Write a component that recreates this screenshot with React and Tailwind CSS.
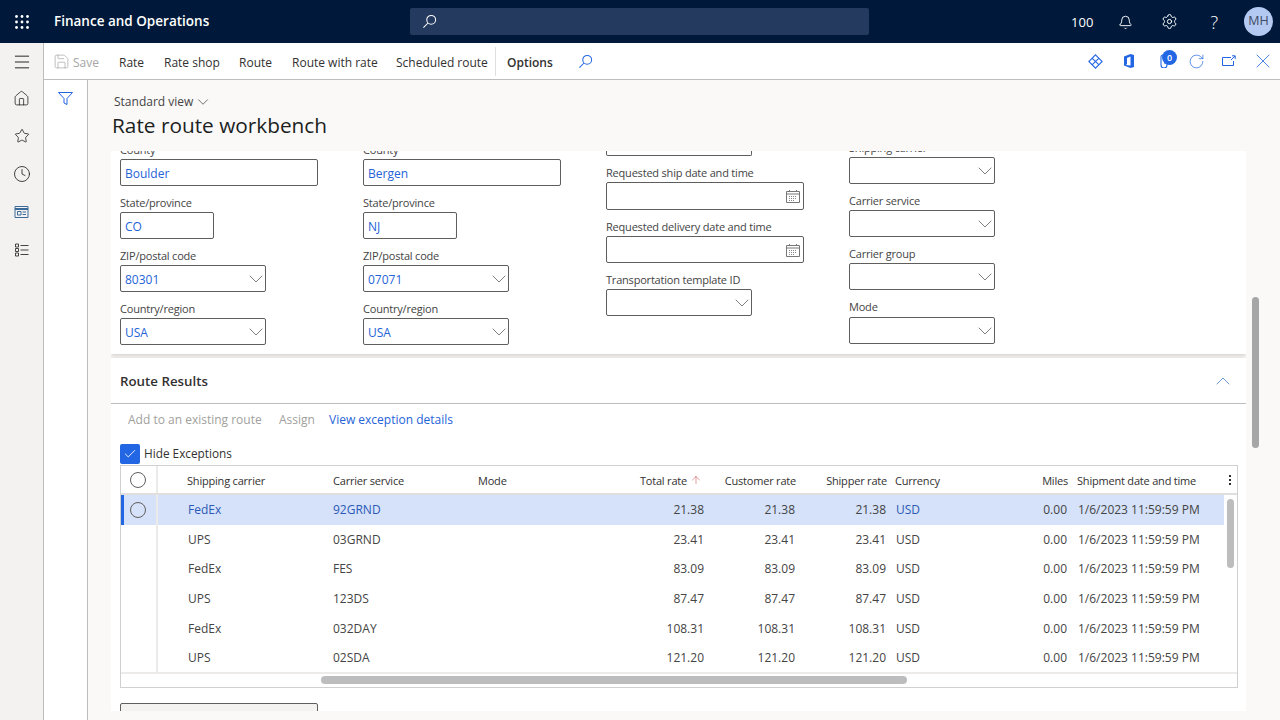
import { ChevronDown, ChevronUp, ArrowUp, Check, X, Bell, Settings, Home, Star, Clock, Menu, Save, RotateCw } from 'lucide-react';

const rows = [
  ['FedEx', '92GRND', '21.38'],
  ['UPS', '03GRND', '23.41'],
  ['FedEx', 'FES', '83.09'],
  ['UPS', '123DS', '87.47'],
  ['FedEx', '032DAY', '108.31'],
  ['UPS', '02SDA', '121.20'],
];

function SearchIcon({ className }) {
  return (
    <svg viewBox="0 0 16 16" className={className} fill="none" stroke="currentColor" strokeWidth="1.1">
      <circle cx="9.8" cy="6.2" r="4.7" />
      <path d="M6.4 9.6 1.5 14.5" />
    </svg>
  );
}

function Waffle() {
  return (
    <svg viewBox="0 0 14 14" className="w-[14px] h-[14px]" fill="#fff">
      {[1.5, 7, 12.5].map((y) =>
        [1.5, 7, 12.5].map((x) => <circle key={`${x}-${y}`} cx={x} cy={y} r="1.4" />)
      )}
    </svg>
  );
}

function CalendarIcon() {
  return (
    <svg viewBox="0 0 14 14" className="w-[14px] h-[14px]" fill="none" stroke="#777" strokeWidth="1">
      <path d="M.5 2.5h13v11H.5zM.5 5h13M3.5 1v2M10.5 1v2" />
      <path d="M3 7.5h8M3 9.5h8M3 11.5h6" strokeDasharray="1 1" stroke="#8a8a8a" />
    </svg>
  );
}

function Field({ label, labelClass = 'h-[26px] pb-px', children }) {
  return (
    <div>
      <div className={`${labelClass} flex items-end text-[11px] tracking-[-0.2px] leading-4 text-[#444] whitespace-nowrap`}>{label}</div>
      {children}
    </div>
  );
}

function TextBox({ value, width = 'w-[198px]' }) {
  return (
    <div className={`${width} h-[27px] border border-[#605e5c] rounded-[2px] bg-white px-[4px] pt-[2px] flex items-center text-[12px] text-[#2563d8]`}>
      {value}
    </div>
  );
}

function Combo({ value }) {
  return (
    <div className="w-[146px] h-[27px] border border-[#605e5c] rounded-[2px] bg-white pl-[4px] flex items-center justify-between text-[12px] text-[#2563d8]">
      <span className="pt-[2px]">{value}</span>
      <ChevronDown className="w-[24px] h-[24px] -mr-[3px] text-[#605e5c]" strokeWidth={0.8} />
    </div>
  );
}

function DateBox({ tall }) {
  return (
    <div className={`w-[198px] ${tall ? 'h-[28px]' : 'h-[27px]'} border border-[#605e5c] rounded-[2px] bg-white pr-[3px] flex items-center justify-end`}>
      <CalendarIcon />
    </div>
  );
}

function AddressColumn({ county, state, zip }) {
  return (
    <div className="w-[243px] shrink-0 -mt-[18px]">
      <Field label="County"><TextBox value={county} /></Field>
      <Field label="State/province"><TextBox value={state} width="w-[94px]" /></Field>
      <Field label="ZIP/postal code"><Combo value={zip} /></Field>
      <Field label="Country/region"><Combo value="USA" /></Field>
    </div>
  );
}

function ResultRow({ row, selected }) {
  const [carrier, service, rate] = row;
  const tone = selected ? 'text-[#2b59b5]' : 'text-[#444]';
  return (
    <div className={`flex items-center h-[29.7px] text-[12px] ${selected ? 'bg-[#d5e2f9]' : 'bg-white'}`}>
      <div className={`w-[37px] h-full shrink-0 border-r-2 border-[#edebe9] flex items-center justify-center ${selected ? 'border-l-[3px] border-l-[#2266e3] pr-[4px]' : ''}`}>
        {selected && <span className="w-[16px] h-[16px] rounded-full border border-[#605e5c]" />}
      </div>
      <div className={`w-[175px] pl-[30px] ${tone}`}>{carrier}</div>
      <div className={`w-[145px] ${tone}`}>{service}</div>
      <div className="w-[116px]" />
      <div className="w-[110px] text-right text-[#444]">{rate}</div>
      <div className="w-[91px] text-right text-[#444]">{rate}</div>
      <div className="w-[91px] text-right text-[#444]">{rate}</div>
      <div className={`w-[100px] pl-[10px] ${tone}`}>USD</div>
      <div className="w-[81px] text-right text-[#444]">0.00</div>
      <div className="w-[146px] pl-[11px] text-[#444] whitespace-nowrap">1/6/2023 11:59:59 PM</div>
    </div>
  );
}

export default function App() {
  return (
    <div className="w-[1280px] h-[720px] overflow-hidden flex flex-col bg-white font-['Open_Sans',sans-serif] text-[#323130]">
      {/* TOP BAR */}
      <header className="h-[43px] shrink-0 bg-[#00193a] text-white flex items-center">
        <div className="w-[44px] flex justify-center"><Waffle /></div>
        <div className="ml-[10px] w-[356px] text-[13.5px] font-semibold">Finance and Operations</div>
        <div className="w-[459px] h-[27px] bg-[#243a5e] rounded-[2px] flex items-center pl-[12px]">
          <SearchIcon className="w-[15px] h-[15px]" />
        </div>
        <div className="flex-1 flex items-center justify-end text-white">
          <span className="text-[13px] mr-[25px] pt-[3px]">100</span>
          <Bell className="w-[15px] h-[15px] mt-[1px] mr-[28px]" strokeWidth={1.5} />
          <Settings className="w-[17px] h-[17px] mr-[32px]" strokeWidth={1.4} />
          <span className="text-[18px] font-light mr-[26px] leading-none">?</span>
          <div className="w-[29px] h-[29px] rounded-full bg-[#b4c9f1] text-[#3d4a63] text-[12.5px] flex items-center justify-center mr-[7px]">MH</div>
        </div>
      </header>

      <div className="flex flex-1 min-h-0">
        {/* NAV RAIL */}
        <nav className="w-[44px] shrink-0 bg-[#f3f2f1] border-r border-[#bdbdbd] flex flex-col items-center text-[#201f1e]">
          <div className="h-[36px] pt-[2px] flex items-center"><Menu className="w-[20px] h-[20px]" strokeWidth={1.15} /></div>
          <div className="h-[38px] flex items-center"><Home className="w-[17px] h-[17px]" strokeWidth={1.1} /></div>
          <div className="h-[38px] flex items-center"><Star className="w-[16px] h-[16px]" strokeWidth={1.2} /></div>
          <div className="h-[38px] flex items-center"><Clock className="w-[18px] h-[18px]" strokeWidth={1.1} /></div>
          <div className="h-[38px] flex items-center">
            <svg viewBox="0 0 14 12" className="w-[15px] h-[12px]" fill="none" stroke="#3c6a99" strokeWidth="1">
              <path d="M.5.5h13v11H.5z" />
              <path d="M.5 3h13" strokeWidth="2" />
              <path d="M3 5.500h3.500v3.500H3zM8 6h3.500M8 8.500h3.500" />
            </svg>
          </div>
          <div className="h-[38px] flex items-center">
            <svg viewBox="0 0 14 14" className="w-[14px] h-[14px]" fill="none" stroke="#444" strokeWidth="1">
              <path d="M.5 1h3v3h-3zM.5 5.500h3v3h-3zM.5 10h3v3h-3zM5.500 2.500h8M5.500 7h8M5.500 11.500h8" />
            </svg>
          </div>
        </nav>

        <div className="flex-1 min-w-0 flex flex-col">
          {/* COMMAND BAR */}
          <div className="h-[37px] shrink-0 border-b border-[#bdbdbd] bg-white flex items-center text-[12px] text-[#323130]">
            <div className="ml-[9px] flex items-center gap-[3px] text-[#a6a6a6] w-[66px]">
              <Save className="w-[17px] h-[17px]" strokeWidth={1} />
              <span className="mt-[3px]">Save</span>
            </div>
            <span className="w-[45px] mt-[3px]">Rate</span>
            <span className="w-[75px] mt-[3px]">Rate shop</span>
            <span className="w-[53px] mt-[3px]">Route</span>
            <span className="w-[104px] mt-[3px]">Route with rate</span>
            <span className="w-[100px] pr-[8px] pt-[3px] border-r border-[#e1dfdd] h-[29px] flex items-center whitespace-nowrap">Scheduled route</span>
            <span className="ml-[11px] mt-[3px] font-semibold">Options</span>
            <SearchIcon className="w-[15px] h-[15px] ml-[25px] text-[#2266e3]" />
            <div className="ml-auto flex items-center text-[#2266e3]">
              <svg viewBox="0 0 14 14" className="w-[15px] h-[15px] mr-[20px]" fill="none" stroke="currentColor" strokeWidth="1">
                <path d="M7 .8 13.200 7 7 13.200.8 7zM4 4l6 6M10 4l-6 6" />
              </svg>
              <svg viewBox="0 0 12 14" className="w-[12px] h-[14px] mr-[24px]" fill="currentColor" fillRule="evenodd">
                <path d="M7.500 0 1 2.500v9L7.500 14l3.500-1V1zM7.500 2.500v9L3 11l1-1V4z" />
              </svg>
              <div className="relative w-[10px] h-[14px] mr-[19px]">
                <svg viewBox="0 0 10 14" className="w-[10px] h-[14px]" fill="none" stroke="currentColor" strokeWidth="1.1">
                  <path d="M8 3v8a3 3 0 0 1-6 0V3a2 2 0 0 1 4 0v7" />
                </svg>
                <span className="absolute -top-[4px] left-[3px] w-[15px] h-[15px] rounded-full bg-[#2266e3] text-white text-[9px] font-semibold flex items-center justify-center">0</span>
              </div>
              <RotateCw className="w-[17px] h-[17px] mr-[17px]" strokeWidth={1} />
              <svg viewBox="0 0 14 12" className="w-[14px] h-[12px] mr-[15px]" fill="none" stroke="currentColor" strokeWidth="1">
                <path d="M9 2.500H.5v8h11V6M9 5l4-4M10 .8h3.200V4" />
              </svg>
              <X className="w-[24px] h-[24px] mr-[5px]" strokeWidth={0.8} />
            </div>
          </div>

          <div className="flex-1 min-h-0 flex">
            {/* FILTER PANE */}
            <div className="w-[44px] shrink-0 border-r border-[#bdbdbd] bg-white flex justify-center pt-[12px]">
              <svg viewBox="0 0 15 13" className="w-[15px] h-[13px] text-[#2266e3]" fill="none" stroke="currentColor" strokeWidth="1">
                <path d="M.5.500h14L9 6.500v6L6 11V6.500z" />
              </svg>
            </div>

            {/* CONTENT */}
            <div className="flex-1 min-w-0 bg-[#faf9f8] flex flex-col">
              <div className="h-[71px] shrink-0 pl-[24px]">
                <div className="pt-[13px] ml-[2px] flex items-center gap-[1px] text-[12px] leading-4 text-[#444]">
                  Standard view <ChevronDown className="w-[18px] h-[18px]" strokeWidth={1} />
                </div>
                <h1 className="text-[20.800px] leading-7 text-[#201f1e]">Rate route workbench</h1>
              </div>

              <div className="flex-1 min-h-0 flex">
                <div className="ml-[23px] w-[1135px] shrink-0 h-[560px] overflow-hidden">
                  {/* ADDRESS FORM */}
                  <section className="h-[203px] bg-white shadow-[0_1px_4px_rgba(0,0,0,0.2)] overflow-hidden pl-[9px] flex">
                    <AddressColumn county="Boulder" state="CO" zip="80301" />
                    <AddressColumn county="Bergen" state="NJ" zip="07071" />
                    <div className="w-[243px] shrink-0">
                      <div className="w-[146px] h-[5px] border border-t-0 border-[#605e5c] rounded-b-[2px]" />
                      <Field label="Requested ship date and time"><DateBox tall /></Field>
                      <Field label="Requested delivery date and time"><DateBox /></Field>
                      <Field label="Transportation template ID"><Combo /></Field>
                    </div>
                    <div className="w-[243px] shrink-0 -mt-[20px]">
                      <Field label="Shipping carrier"><Combo /></Field>
                      <Field label="Carrier service"><Combo /></Field>
                      <Field label="Carrier group"><Combo /></Field>
                      <Field label="Mode" labelClass="h-[27px] pb-[2px]"><Combo /></Field>
                    </div>
                  </section>

                  {/* ROUTE RESULTS */}
                  <section className="mt-[4px] h-[360px] bg-white shadow-[0_1px_4px_rgba(0,0,0,0.2)] overflow-hidden">
                    <div className="h-[46px] border-b border-[#bdbdbd] pl-[9px] pr-[11px] flex items-center justify-between">
                      <h2 className="text-[13.3px] pt-[2px] font-semibold text-[#323130]">Route Results</h2>
                      <ChevronUp className="w-[24px] h-[24px] text-[#4a7fc7]" strokeWidth={0.8} />
                    </div>
                    <div className="h-[31px] pl-[17px] flex items-center text-[12px]">
                      <span className="text-[#a19f9d] w-[151px] whitespace-nowrap">Add to an existing route</span>
                      <span className="text-[#a19f9d] w-[50px]">Assign</span>
                      <span className="text-[#2563d8]">View exception details</span>
                    </div>
                    <div className="h-[30px] pl-[9px] pt-[9px] flex items-start gap-[4px] text-[11.8px] text-[#323130]">
                      <span className="w-[20px] h-[20px] rounded-[2px] bg-[#2266e3] flex items-center justify-center">
                        <Check className="w-[14px] h-[14px] text-white" strokeWidth={1.5} />
                      </span>
                      <span className="leading-[18px]">Hide Exceptions</span>
                    </div>

                    {/* GRID */}
                    <div className="ml-[9px] w-[1118px] h-[223px] border border-[#d0d0d0] flex flex-col">
                      <div className="h-[29px] shrink-0 border-b-2 border-[#e1dfdd] flex items-center text-[11px] tracking-[-0.2px] text-[#323130]">
                        <div className="w-[37px] h-full shrink-0 border-r-2 border-[#edebe9] pr-[2px] flex items-center justify-center">
                          <span className="w-[16px] h-[16px] rounded-full border border-[#605e5c]" />
                        </div>
                        <div className="w-[175px] pl-[29px] pt-[3px]">Shipping carrier</div>
                        <div className="w-[145px] pt-[3px]">Carrier service</div>
                        <div className="w-[116px] pt-[3px]">Mode</div>
                        <div className="w-[111px] pr-[3px] flex items-center justify-end gap-[3px]">
                          <span className="pt-[3px]">Total rate</span> <ArrowUp className="w-[12px] h-[12px] text-[#c8383c]" strokeWidth={1} />
                        </div>
                        <div className="w-[91px] pt-[3px] text-right">Customer rate</div>
                        <div className="w-[91px] pt-[3px] text-right">Shipper rate</div>
                        <div className="w-[99px] pl-[8px] pt-[3px]">Currency</div>
                        <div className="w-[82px] pt-[3px] text-right">Miles</div>
                        <div className="w-[145px] pl-[9px] pt-[3px] whitespace-nowrap">Shipment date and time</div>
                        <div className="ml-auto mr-[6px] flex flex-col gap-[2px]">
                          <span className="w-[2px] h-[2px] bg-[#323130]" />
                          <span className="w-[2px] h-[2px] bg-[#323130]" />
                          <span className="w-[2px] h-[2px] bg-[#323130]" />
                        </div>
                      </div>
                      <div className="flex-1 min-h-0 flex">
                        <div className="w-[1103px] shrink-0 overflow-hidden">
                          {rows.map((row, i) => (
                            <ResultRow key={row[1]} row={row} selected={i === 0} />
                          ))}
                        </div>
                        <div className="flex-1 pt-[4px] pl-[3px]">
                          <div className="w-[7px] h-[69px] rounded-full bg-[#bdbdbd]" />
                        </div>
                      </div>
                      <div className="h-[15px] shrink-0 border-t-2 border-[#edebe9] pl-[200px] pt-[2px]">
                        <div className="w-[586px] h-[8px] rounded-full bg-[#bdbdbd]" />
                      </div>
                    </div>

                    <div className="ml-[9px] mt-[15px] w-[198px] h-[27px] border border-[#605e5c] rounded-[2px] bg-[#f3f2f1]" />
                  </section>
                </div>

                {/* PAGE SCROLLBAR */}
                <div className="ml-[6px] w-[7px] pt-[146px]">
                  <div className="h-[151px] rounded-full bg-[#a6a6a6]" />
                </div>
              </div>
              <div className="h-[9px] shrink-0" />
            </div>
          </div>
        </div>
      </div>
    </div>
  );
}
